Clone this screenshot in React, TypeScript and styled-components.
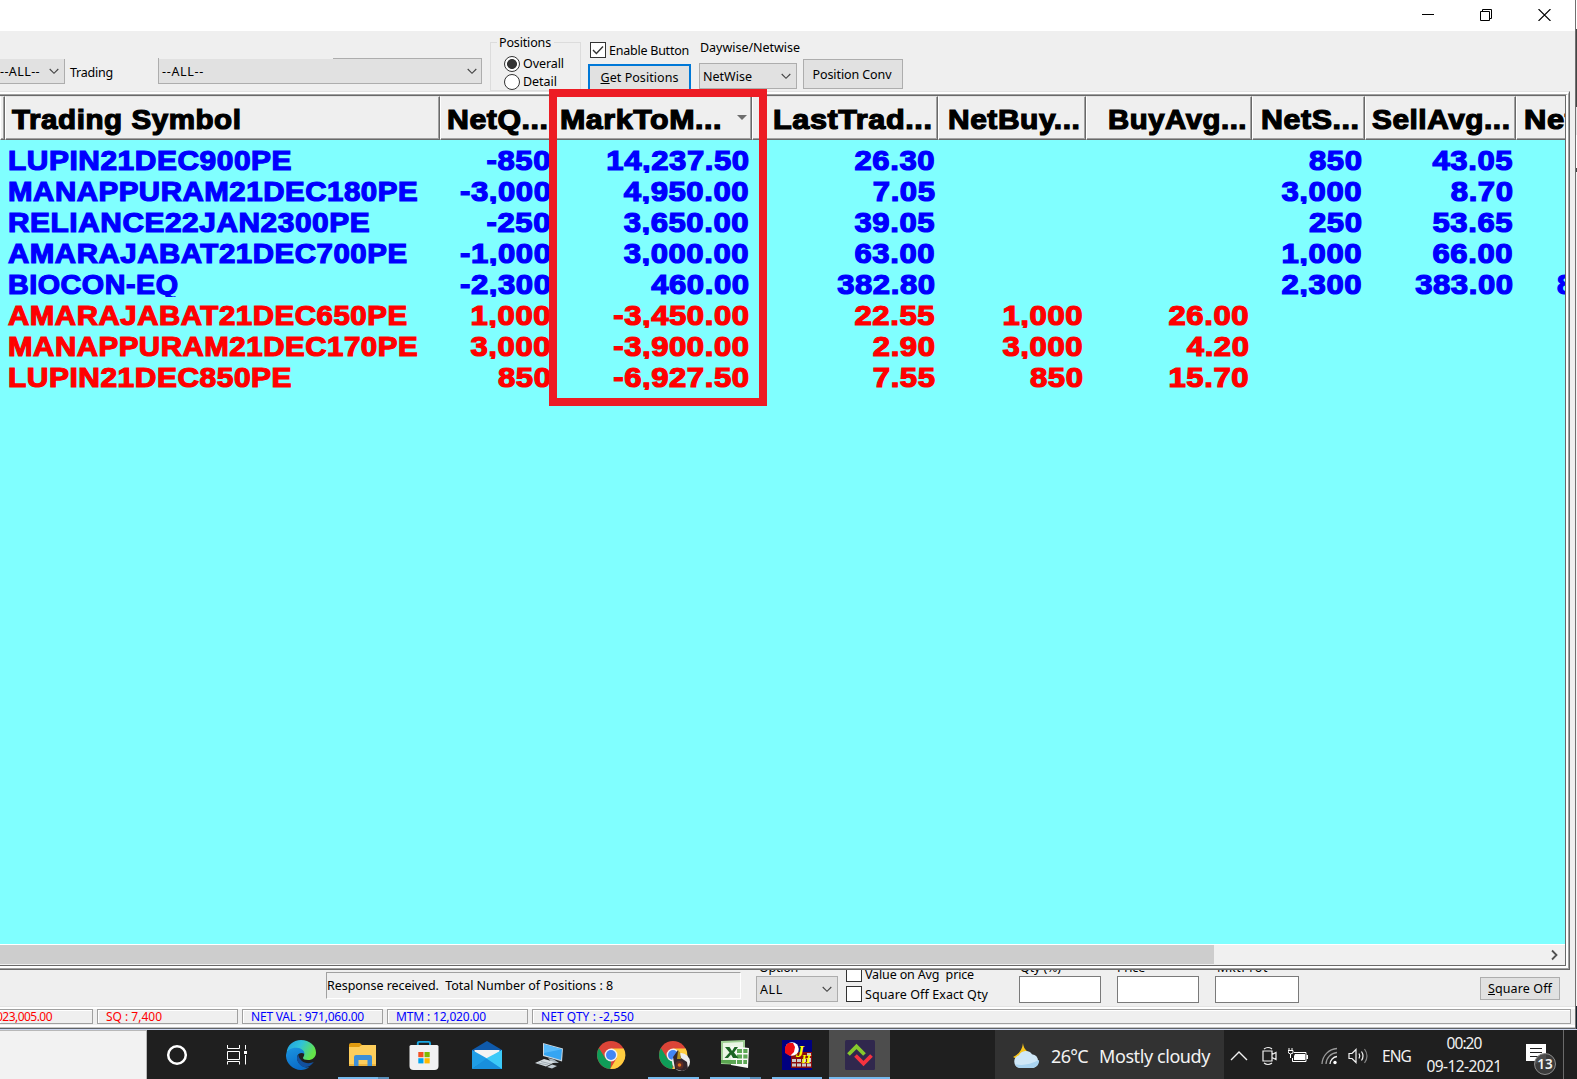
import React, { useLayoutEffect, useRef, useState } from "react";
import styled, { createGlobalStyle, css } from "styled-components";

const UI = `"Noto Sans", "Open Sans", "Liberation Sans", sans-serif`;
const HEAVY = `"Liberation Sans", Arial, sans-serif`;
const COLUMNS = "5px 435px 114px 198px 186px 148px 166px 113px 151px 100px";

const Global = createGlobalStyle`
  * { box-sizing: border-box; }
  html, body { margin: 0; padding: 0; overflow: hidden; background: #efefef; }
  body { font-family: ${UI}; font-size: 12.5px; color: #000; }
`;

/* ---------- text that is tracked to a given width ---------- */
const FitBox = styled.span<{ $w: number }>`
  display: inline-block;
  flex: none;
  width: ${(p) => p.$w}px;
  white-space: pre;
`;

function Fit({ w, children, hotkey }: { w: number; children: string; hotkey?: boolean }) {
  const ref = useRef<HTMLSpanElement>(null);
  const [ls, setLs] = useState(0);
  useLayoutEffect(() => {
    const el = ref.current;
    if (el) setLs((w - el.getBoundingClientRect().width) / children.length);
  }, []);
  return (
    <FitBox $w={w}>
      <span ref={ref} style={{ letterSpacing: `${ls}px` }}>
        {hotkey ? <><u>{children[0]}</u>{children.slice(1)}</> : children}
      </span>
    </FitBox>
  );
}

/* ---------- bold text widened to a given width ---------- */
const Wide = styled.span`
  display: inline-block;
  transform-origin: 0 0;
`;

function Heavy({ w, children }: { w: number; children: string }) {
  const ref = useRef<HTMLSpanElement>(null);
  const [k, setK] = useState(1);
  useLayoutEffect(() => {
    const el = ref.current;
    if (el) setK(w / el.offsetWidth);
  }, []);
  return (
    <FitBox $w={w}>
      <Wide ref={ref} style={{ transform: `scaleX(${k})` }}>{children}</Wide>
    </FitBox>
  );
}

/* ---------- shell ---------- */
const Screen = styled.div`
  width: 1577px;
  height: 1079px;
  display: flex;
  flex-direction: column;
  overflow: hidden;
`;
const Desktop = styled.div`
  height: 1030px;
  display: flex;
`;
const Win = styled.div`
  width: 1575px;
  display: flex;
  flex-direction: column;
  background: #efefef;
`;
const Edge = styled.div`
  width: 2px;
  background: linear-gradient(#707070, #707070) 0 0 / 1px 100% no-repeat,
    linear-gradient(#fff 0 29px, #454545 29px 107px, #e8e8e8 107px 135px, #fff 135px 168px, #444 168px 172px, #f4f4f4 172px 1006px, #14222c 1006px);
`;
const TitleBar = styled.div`
  height: 31px;
  background: #fff;
  display: flex;
  justify-content: flex-end;
  padding: 9px 24px 0 0;
  gap: 46px;
  flex: none;
`;
const Toolbar = styled.div`
  height: 60px;
  flex: none;
  display: flex;
  align-items: flex-start;
`;
const Label = styled.div<{ $mt?: number; $ml?: number }>`
  line-height: 16px;
  height: 16px;
  margin: ${(p) => p.$mt ?? 0}px 0 0 ${(p) => p.$ml ?? 0}px;
  white-space: pre;
`;
const Combo = styled.div<{ $w: number; $h: number; $openTop?: boolean }>`
  width: ${(p) => p.$w}px;
  height: ${(p) => p.$h}px;
  background: #e1e1e1;
  border: 1px solid #adadad;
  ${(p) => p.$openTop && css`border-top: 0; border-left: 0;`}
  display: flex;
  align-items: center;
  justify-content: space-between;
  padding: 1px 5px 0 3px;
  flex: none;
  line-height: 16px;
`;
const WideCombo = styled(Combo)`
  margin: 27px 0 0 45px;
  padding-top: 2px;
  padding-right: 4px;
  background: linear-gradient(90deg, #efefef 174px, #adadad 174px) 0 0 / 100% 1px no-repeat, #e1e1e1;
  border-top: 0;
`;
const CornerCombo = styled(Combo)`
  margin-top: 28px;
  padding: 1px 5px 0 0;
`;
const NetCombo = styled(Combo)`
  margin-top: 7px;
`;
const Group = styled.div`
  width: 91px;
  height: 49px;
  margin: 11px 0 0 8px;
  border: 1px solid #dcdcdc;
  flex: none;
`;
const Legend = styled.div`
  margin: -8px 0 0 6px;
  padding: 0 2px;
  width: 57px;
  height: 16px;
  line-height: 16px;
  background: #efefef;
`;
const Option = styled.label`
  display: flex;
  align-items: center;
  gap: 3px;
  height: 18px;
  padding-left: 13px;
  line-height: 16px;
`;
const OptionList = styled.div`
  margin-top: 4px;
`;
const Dot = styled.span<{ $on?: boolean }>`
  width: 16px;
  height: 16px;
  border-radius: 50%;
  border: 1px solid #333;
  background: ${(p) => (p.$on ? "radial-gradient(circle, #333 0 4.6px, #fff 5.3px)" : "#fff")};
`;
const Stack = styled.div<{ $ml: number; $mt: number }>`
  margin: ${(p) => p.$mt}px 0 0 ${(p) => p.$ml}px;
  display: flex;
  flex-direction: column;
  flex: none;
`;
const CheckRow = styled.div<{ $ml?: number; $mt?: number }>`
  display: flex;
  gap: 3px;
  height: 16px;
  line-height: 16px;
  align-items: center;
  margin: ${(p) => p.$mt ?? 0}px 0 0 ${(p) => p.$ml ?? 0}px;
  & > ${FitBox} { margin-top: 2px; }
`;
const Box = styled.span`
  width: 16px;
  height: 16px;
  border: 1px solid #333;
  background: #fff;
  display: flex;
  flex: none;
`;
const Button = styled.div<{ $w: number; $h: number; $focus?: boolean }>`
  width: ${(p) => p.$w}px;
  height: ${(p) => p.$h}px;
  border: ${(p) => (p.$focus ? "2px solid #0078d7" : "1px solid #adadad")};
  background: #e1e1e1;
  display: flex;
  align-items: center;
  justify-content: center;
  line-height: 16px;
  flex: none;
`;
const GetButton = styled(Button)`
  margin-top: 6px;
`;
const ConvButton = styled(Button)`
  margin: 28px 0 0 3px;
  padding: 2px 2px 0 0;
`;

/* ---------- table ---------- */
const Bevel = styled.div`
  width: 1570px;
  height: 879px;
  flex: none;
  border-style: solid;
  border-width: 1px 1px 1px 0;
  border-color: #e3e3e3 #696969 #696969;
`;
const BevelMid = styled.div`
  height: 877px;
  border-style: solid;
  border-width: 2px 1px 1px 0;
  border-color: #fff #a0a0a0 #a0a0a0;
`;
const BevelIn = styled.div`
  height: 874px;
  border-style: solid;
  border-width: 1px 2px 2px 0;
  border-color: #a0a0a0 #fff #fff;
`;
const TableFrame = styled.div`
  height: 871px;
  border-style: solid;
  border-width: 1px 1px 1px 0;
  border-color: #696969;
  position: relative;
  display: flex;
  flex-direction: column;
  background: #80ffff;
`;
const Clip = styled.div`
  width: 1565px;
  overflow: hidden;
  flex: 1;
`;
const HeadRow = styled.div`
  display: grid;
  grid-template-columns: ${COLUMNS};
  height: 44px;
  width: 1616px;
`;
const HeadCell = styled.div<{ $align?: string; $pad?: number; $left?: number }>`
  height: 44px;
  min-width: 0;
  background: #efefef;
  border-top: 1px solid #e3e3e3;
  border-left: 1px solid #fff;
  border-right: 1px solid #696969;
  border-bottom: 1px solid #696969;
  box-shadow: inset -1px -1px 0 #a0a0a0;
  display: flex;
  align-items: center;
  justify-content: ${(p) => p.$align ?? "flex-end"};
  padding: 3px ${(p) => p.$pad ?? 4}px 0 ${(p) => p.$left ?? 6}px;
  font: 700 27px/38px ${HEAVY};
  letter-spacing: 0.5px;
  -webkit-text-stroke: 1.2px #000;
  white-space: nowrap;
`;
const SortArrow = styled.i`
  border: 5px solid transparent;
  border-top-color: #6d6d6d;
  border-bottom: 0;
  margin: 0 0 4px 15px;
`;
const Row = styled.div<{ $loss: boolean }>`
  display: grid;
  grid-template-columns: ${COLUMNS};
  height: 31px;
  width: 1616px;
  clip-path: inset(0 0 -2px 0);
  color: ${(p) => (p.$loss ? "#ff0000" : "#0000ff")};
  font: 700 27px/42px ${HEAVY};
  letter-spacing: 0.5px;
  -webkit-text-stroke: 1.2px currentColor;
`;
const NumCell = styled.div`
  text-align: right;
  padding-right: 2.5px;
  white-space: nowrap;
`;
const Num = styled.span`
  display: inline-block;
  transform: scaleX(1.15);
  transform-origin: 100% 0;
`;
const SymCell = styled.div`
  padding-left: 3px;
  white-space: nowrap;
`;
const LastCell = styled(SymCell)`
  padding-left: 41px;
`;
const HScroll = styled.div`
  height: 21px;
  width: 1565px;
  border-top: 1px solid #fff;
  background: #f0f0f0;
  display: flex;
  justify-content: space-between;
  align-items: center;
  padding-right: 7px;
  flex: none;
`;
const Thumb = styled.div`
  width: 1214px;
  height: 19px;
  background: #cdcdcd;
  align-self: flex-start;
`;
const Highlight = styled.div`
  position: absolute;
  left: 549px;
  top: -7px;
  width: 218px;
  height: 317px;
  border: 8px solid #ed1c24;
`;

/* ---------- footer ---------- */
const Footer = styled.div`
  height: 36px;
  flex: none;
  display: flex;
  align-items: flex-start;
  overflow: hidden;
`;
const Message = styled.div`
  margin: 2px 0 0 326px;
  width: 415px;
  height: 27px;
  border: 1px solid;
  border-color: #a0a0a0 #fff #fff #a0a0a0;
  line-height: 25px;
  flex: none;
`;
const Cut = styled.div<{ $ml: number }>`
  line-height: 16px;
  height: 16px;
  margin: -10px 0 0 ${(p) => p.$ml}px;
`;
const Field = styled.div<{ $w: number }>`
  width: ${(p) => p.$w}px;
  height: 27px;
  background: #fff;
  border: 1px solid #7a7a7a;
`;
const Status = styled.div`
  height: 24px;
  flex: none;
  border-top: 1px solid #e3e3e3;
  background: linear-gradient(#fff 0 2px, #efefef 2px 18px, #fff 18px 20px, #c4c4c4 20px 21px, #5f6368 21px 22px, #62666e 22px 23px);
  display: flex;
  gap: 4px;
  padding: 2px 4px 0 0;
`;
const Pane = styled.div<{ $w: number; $c?: string }>`
  width: ${(p) => p.$w}px;
  height: 15px;
  border: 1px solid #a0a0a0;
  color: ${(p) => p.$c ?? "#0000ff"};
  line-height: 14px;
  padding-left: 8px;
  flex: none;
  font-size: 12px;
  white-space: pre;
  box-shadow: inset 1px 1px 0 #fff;
`;
const FirstPane = styled(Pane)`
  border-left: 0;
  padding: 0;
  & > span { margin-left: -4px; }
`;

/* ---------- taskbar ---------- */
const Taskbar = styled.div`
  height: 49px;
  background: #1f1f1f;
  border-top: 1px solid #1f1f1f;
  box-shadow: 0 -1px 0 #c9d4ee;
  display: flex;
  color: #f2f2f2;
  position: relative;
`;
const Search = styled.div`
  width: 147px;
  margin-top: -1px;
  background: #f2f2f2;
  border: solid #b8b8b8;
  border-width: 1px 1px 0 0;
`;
const TaskItem = styled.div<{ $w: number; $run?: boolean; $active?: boolean; $ml?: number; $multi?: boolean }>`
  width: ${(p) => p.$w}px;
  margin: -1px 0 0 ${(p) => p.$ml ?? 0}px;
  height: 49px;
  display: flex;
  justify-content: center;
  align-items: flex-start;
  padding-top: 10px;
  flex: none;
  background: ${(p) => (p.$active ? "#4d4d4d" : "transparent")};
  border-bottom: 2px solid ${(p) => (p.$run ? "#76b9ed" : "transparent")};
  ${(p) => p.$multi && css`
    border-bottom: 0;
    padding-right: 2px;
    background: linear-gradient(90deg, #76b9ed 40px, #5a8fb9 40px) 0 100% / 100% 2px no-repeat;
  `}
`;
const Weather = styled.div`
  margin: -1px 0 0 105px;
  width: 229px;
  height: 49px;
  background: #323232;
  display: flex;
  align-items: center;
  padding: 2px 0 0 18px;
  font-size: 18px;
  line-height: 24px;
  gap: 11px;
  flex: none;
`;
const Tray = styled.div`
  display: flex;
  align-items: center;
  font-size: 15.5px;
  line-height: 22px;
  padding: 2px 0 0 6px;
`;
const TrayItem = styled.div<{ $ml: number }>`
  margin-left: ${(p) => p.$ml}px;
  display: flex;
`;
const Clock = styled.div`
  width: 76px;
  margin: -2px 0 0 15px;
  display: flex;
  flex-direction: column;
  align-items: center;
  line-height: 23px;
`;
const ShowDesktop = styled.div`
  border-left: 1px solid #6a6a6a;
  margin: -1px 0 0 16px;
  width: 6px;
`;
const Notice = styled.div`
  position: relative;
  margin: 6px 0 0 24px;
  height: 30px;
`;
const Badge = styled.span`
  position: absolute;
  left: 8px;
  top: 9px;
  width: 22px;
  height: 22px;
  border-radius: 50%;
  border: 1px solid #8d8d8d;
  background: rgba(62, 62, 62, 0.92);
  font-size: 13.5px;
  font-weight: 600;
  line-height: 20px;
  text-align: center;
`;

const Chevron = () => (
  <svg width="10" height="7" viewBox="0 0 10 7"><path d="M0.7 1 L5 5.3 L9.3 1" fill="none" stroke="#444" strokeWidth="1.1" /></svg>
);

const Chrome = ({ x = 15, y = 15 }: { x?: number; y?: number }) => (
  <g transform={`translate(${x} ${y})`}>
    <circle r="14" fill="#db4437" />
    <path d="M-12.1 -7 L-5.6 3.4 L0 6.5 L-0.5 14 A14 14 0 0 1 -12.1 -7Z" fill="#0f9d58" />
    <path d="M0 -6.4 H12.7 A14 14 0 0 1 -0.8 14 L5.6 3.2Z" fill="#ffcd40" />
    <circle r="6.4" fill="#f1f1f1" />
    <circle r="5" fill="#4285f4" />
  </g>
);

const headers = ["NetQ...", "MarkToM...", "LastTrad...", "NetBuy...", "BuyAvg...", "NetS...", "SellAvg..."];
const headWidths = [102, 162, 160, 133, 139, 99, 139];

type Position = { symbol: string; w: number; loss?: boolean; v: string[] };
const positions: Position[] = [
  { symbol: "LUPIN21DEC900PE", w: 284.5, v: ["-850", "14,237.50", "26.30", "", "", "850", "43.05", ""] },
  { symbol: "MANAPPURAM21DEC180PE", w: 410, v: ["-3,000", "4,950.00", "7.05", "", "", "3,000", "8.70", ""] },
  { symbol: "RELIANCE22JAN2300PE", w: 362.5, v: ["-250", "3,650.00", "39.05", "", "", "250", "53.65", ""] },
  { symbol: "AMARAJABAT21DEC700PE", w: 400, v: ["-1,000", "3,000.00", "63.00", "", "", "1,000", "66.00", ""] },
  { symbol: "BIOCON-EQ", w: 171, v: ["-2,300", "460.00", "382.80", "", "", "2,300", "383.00", "8"] },
  { symbol: "AMARAJABAT21DEC650PE", w: 400, loss: true, v: ["1,000", "-3,450.00", "22.55", "1,000", "26.00", "", "", ""] },
  { symbol: "MANAPPURAM21DEC170PE", w: 410, loss: true, v: ["3,000", "-3,900.00", "2.90", "3,000", "4.20", "", "", ""] },
  { symbol: "LUPIN21DEC850PE", w: 284.5, loss: true, v: ["850", "-6,927.50", "7.55", "850", "15.70", "", "", ""] },
];

function Titles() {
  return (
    <TitleBar>
      <svg width="12" height="12"><path d="M0 5.5H12" stroke="#000" /></svg>
      <svg width="12" height="12" fill="none" stroke="#000"><path d="M0.5 2.5H9.5V11.5H0.5ZM2.5 2.5V0.5H11.5V9.5H9.5" /></svg>
      <svg width="13" height="12"><path d="M0.5 0L12.5 12M12.5 0L0.5 12" stroke="#000" strokeWidth="1.1" /></svg>
    </TitleBar>
  );
}

function Controls() {
  return (
    <Toolbar>
      <CornerCombo $w={65} $h={25} $openTop><Fit w={40}>--ALL--</Fit><Chevron /></CornerCombo>
      <Label $mt={34} $ml={5}><Fit w={43}>Trading</Fit></Label>
      <WideCombo $w={324} $h={26}><Fit w={42}>--ALL--</Fit><Chevron /></WideCombo>
      <Group>
        <Legend><Fit w={52}>Positions</Fit></Legend>
        <OptionList>
          <Option><Dot $on /><Fit w={41}>Overall</Fit></Option>
          <Option><Dot /><Fit w={34}>Detail</Fit></Option>
        </OptionList>
      </Group>
      <Stack $ml={7} $mt={11}>
        <CheckRow $ml={2}>
          <Box><svg width="14" height="14"><path d="M2 7L5.4 10.4L12 3.6" fill="none" stroke="#333" strokeWidth="1.4" /></svg></Box>
          <Fit w={80}>Enable Button</Fit>
        </CheckRow>
        <GetButton $w={103} $h={27} $focus><Fit w={78} hotkey>Get Positions</Fit></GetButton>
      </Stack>
      <Stack $ml={8} $mt={9}>
        <Label $ml={1}><Fit w={100}>Daywise/Netwise</Fit></Label>
        <NetCombo $w={98} $h={26}><Fit w={49}>NetWise</Fit><Chevron /></NetCombo>
      </Stack>
      <ConvButton $w={100} $h={30}><Fit w={79}>Position Conv</Fit></ConvButton>
    </Toolbar>
  );
}

function Positions() {
  return (
    <Bevel><BevelMid><BevelIn><TableFrame>
      <Clip>
        <HeadRow>
          <HeadCell $pad={0} $left={0} />
          <HeadCell $align="flex-start"><Heavy w={230}>Trading Symbol</Heavy></HeadCell>
          {headers.map((h, i) => (
            <HeadCell key={h}>
              <Heavy w={headWidths[i]}>{h}</Heavy>
              {i === 1 && <SortArrow />}
            </HeadCell>
          ))}
          <HeadCell $align="flex-start" $left={7}><Heavy w={109}>NetSell</Heavy></HeadCell>
        </HeadRow>
        {positions.map((p) => (
          <Row key={p.symbol} $loss={!!p.loss}>
            <span />
            <SymCell><Heavy w={p.w}>{p.symbol}</Heavy></SymCell>
            {p.v.slice(0, 7).map((v, i) => <NumCell key={i}><Num>{v}</Num></NumCell>)}
            <LastCell>{p.v[7] && <Heavy w={18}>{p.v[7]}</Heavy>}</LastCell>
          </Row>
        ))}
      </Clip>
      <HScroll>
        <Thumb />
        <svg width="7" height="12"><path d="M1 1.5L5.5 6L1 10.5" fill="none" stroke="#505050" strokeWidth="1.8" /></svg>
      </HScroll>
      <Highlight />
    </TableFrame></BevelIn></BevelMid></Bevel>
  );
}

function Bottom() {
  return (
    <>
      <Footer>
        <Message><Fit w={286}>Response received.  Total Number of Positions : 8</Fit></Message>
        <Stack $ml={15} $mt={0}>
          <Cut $ml={3}><Fit w={39}>Option</Fit></Cut>
          <Combo $w={82} $h={26}><Fit w={23}>ALL</Fit><Chevron /></Combo>
        </Stack>
        <Stack $ml={8} $mt={-4}>
          <CheckRow><Box /><Fit w={109}>Value on Avg  price</Fit></CheckRow>
          <CheckRow $mt={4}><Box /><Fit w={123}>Square Off Exact Qty</Fit></CheckRow>
        </Stack>
        <Stack $ml={31} $mt={0}><Cut $ml={1}><Fit w={41}>Qty (%)</Fit></Cut><Field $w={82} /></Stack>
        <Stack $ml={16} $mt={0}><Cut $ml={0}><Fit w={28}>Price</Fit></Cut><Field $w={82} /></Stack>
        <Stack $ml={16} $mt={0}><Cut $ml={2}><Fit w={51}>MktProt</Fit></Cut><Field $w={84} /></Stack>
        <Stack $ml={181} $mt={7}><Button $w={80} $h={23}><Fit w={64} hotkey>Square Off</Fit></Button></Stack>
      </Footer>
      <Status>
        <FirstPane $w={93} $c="#ff0000"><Fit w={56}>023,005.00</Fit></FirstPane>
        <Pane $w={141} $c="#ff0000"><Fit w={56}>SQ : 7,400</Fit></Pane>
        <Pane $w={141}><Fit w={113}>NET VAL : 971,060.00</Fit></Pane>
        <Pane $w={141}><Fit w={90}>MTM : 12,020.00</Fit></Pane>
        <Pane $w={1039}><Fit w={93}>NET QTY : -2,550</Fit></Pane>
      </Status>
    </>
  );
}

function TaskbarRow() {
  return (
    <Taskbar>
      <Search />
      <TaskItem $w={60}><svg width="30" height="30"><circle cx="15" cy="15" r="8.8" fill="none" stroke="#fff" strokeWidth="2.5" /></svg></TaskItem>
      <TaskItem $w={60}>
        <svg width="30" height="30" fill="none" stroke="#fff">
          <path d="M5.5 5V8.5H17.5V5M5.5 11.5H17.5V19.5H5.5ZM5.5 24.5V21.5H17.5V24.5M23.5 5V9.5M23.5 15V24.5" />
          <path d="M22 11H25V14H22Z" fill="#fff" stroke="none" />
        </svg>
      </TaskItem>
      <TaskItem $w={62} $ml={3}>
        <svg width="30" height="30" viewBox="0 0 30 30">
          <defs>
            <linearGradient id="eg" x1="0" y1="0" x2="1" y2="0.4"><stop offset="0" stopColor="#1e9be2" /><stop offset="0.5" stopColor="#30c2d8" /><stop offset="1" stopColor="#63e448" /></linearGradient>
            <linearGradient id="eb" x1="0" y1="0" x2="0.4" y2="1"><stop offset="0" stopColor="#1b95e0" /><stop offset="1" stopColor="#0a6cc8" /></linearGradient>
          </defs>
          <path d="M0.6 13C1 5.5 7 0 15 0C23.5 0 30 5.6 30 12.4C30 17 26.4 20 22 20C19 20 17 19 17 18C17 17 18.4 16.4 18.2 14C17.8 11 15 9 11.5 9C6 9 1.6 11 0.6 13Z" fill="url(#eg)" />
          <path d="M0 15C0.6 9.6 5.6 7.6 10.6 7.8C15.6 8 18.6 11 18.4 14C16.8 12.6 14.4 12.6 12.6 14C9.6 16.6 11 23.6 17 26.6C19 27.8 21.6 27.8 23.6 26.8C21 29 18 30 15 30C6.4 30 -0.4 23 0 15Z" fill="url(#eb)" />
          <path d="M12.4 14.4C9.6 17 11 23.6 16.4 26.4C20.6 28.4 25 26 27.8 22C24 23.8 18.4 23.6 15.4 20.4C13.6 18.6 12.4 16.6 12.4 14.4Z" fill="#12509e" />
        </svg>
      </TaskItem>
      <TaskItem $w={51} $ml={6} $multi>
        <svg width="30" height="30">
          <path d="M1 5Q1 3 3 3H12L14 5V10H1Z" fill="#e09b10" />
          <path d="M1 7H11L14 5H28V25H1Z" fill="#fdce5c" />
          <path d="M1 24H28V26H1Z" fill="#edb53d" />
          <path d="M6 26V17Q6 15 8 15H22Q24 15 24 17V26H19.5V20H10.5V26Z" fill="#3d8fd8" />
        </svg>
      </TaskItem>
      <TaskItem $w={52} $ml={9}>
        <svg width="30" height="31">
          <path d="M8.8 7V3Q8.8 1.9 10 1.9H19.8Q21 1.9 21 3V7" fill="none" stroke="#19a8e4" strokeWidth="1.9" />
          <path d="M0.5 6.5Q0.5 5 2 5H28Q29.5 5 29.5 6.5V26Q29.5 30 25.5 30H4.5Q0.5 30 0.5 26Z" fill="#f1f1f2" />
          <path d="M9.3 12H14.5V17.2H9.3Z" fill="#f25022" /><path d="M15.5 12H20.7V17.2H15.5Z" fill="#7fba00" />
          <path d="M9.3 18.2H14.5V23.4H9.3Z" fill="#00a4ef" /><path d="M15.5 18.2H20.7V23.4H15.5Z" fill="#ffb900" />
        </svg>
      </TaskItem>
      <TaskItem $w={52} $ml={11}>
        <svg width="30" height="30">
          <path d="M0 10L15 1L30 10V13H0Z" fill="#0f5aab" />
          <path d="M2.5 10H27.5V22H2.5Z" fill="#f3f3f3" />
          <path d="M0 10L16 19L0 29Z" fill="#1f9de6" /><path d="M30 10L0 29H30Z" fill="#2fb0f0" />
          <path d="M30 10L14 18.5L30 29Z" fill="#3ccaf8" /><path d="M0 29L14.5 18.5L30 29Z" fill="#188fdc" />
        </svg>
      </TaskItem>
      <TaskItem $w={52} $ml={10}>
        <svg width="30" height="30">
          <path d="M9 3L29 8.5L28 21.5L9 16Z" fill="#c9d5de" />
          <path d="M10 4.3L28 9.3L27 20L10 15Z" fill="#35a5f2" /><path d="M10 4.3L28 9.3L10 13Z" fill="#58bafa" />
          <path d="M14 18L20 19.5L25 23L18 23Z" fill="#a6b2bb" />
          <path d="M1 23L10 19L21 22L12 26.5Z" fill="#d5dce1" /><path d="M13 27L18 24.5L23 26L18 28.5Z" fill="#c0cad2" />
          <path d="M4 23L14 25M7 21.5L17 24" stroke="#8f9ba4" strokeWidth="0.7" />
        </svg>
      </TaskItem>
      <TaskItem $w={52} $ml={10}><svg width="30" height="30"><Chrome /></svg></TaskItem>
      <TaskItem $w={51} $ml={11} $run>
        <svg width="34" height="32">
          <Chrome x={16} />
          <circle cx="24" cy="22" r="9" fill="#ededed" />
          <path d="M16 17L21 10L24 18L30 22L31 29L25 31L18 29Z" fill="#33262c" />
          <path d="M21 11L23 12L24 19H20Z" fill="#b3921f" /><circle cx="22.5" cy="25" r="4" fill="#5a2b28" /><circle cx="22.5" cy="25" r="1.8" fill="#e0711d" />
        </svg>
      </TaskItem>
      <TaskItem $w={51} $ml={11} $multi>
        <svg width="30" height="30">
          <path d="M1 1L25 0L25 25L1 24Z" fill="#9fcf94" /><path d="M3 3L23 2V23L3 22Z" fill="#e9f5e4" />
          <path d="M11 6L29 8L28 28L11 25Z" fill="#f7f9f5" />
          <path d="M17 9H22V13H17ZM23.3 9H27.5V13H23.3ZM17 14.5H22V18.5H17ZM23.3 14.5H27.5V18.5H23.3ZM11.5 20H16V24H11.5ZM17 20H22V24H17ZM23.3 20H27V24H23.3Z" fill="#5da855" />
          <path d="M1 20H12V24L1 23Z" fill="#5aa650" />
          <path d="M5 7H9.5L12 11L14.5 7H18L14 12.5L18.5 18H13L11 14.5L8 18H4.5L9.5 12.5Z" fill="#1c6424" />
        </svg>
      </TaskItem>
      <TaskItem $w={50} $ml={11} $run>
        <svg width="30" height="30">
          <path d="M0 0H30V30H0Z" fill="#000080" />
          <path d="M9 12H30V28H9Z" fill="#8a0d0d" />
          <path d="M10 19h4v3h-4zM15 19h4v3h-4zM20 19h4v3h-4zM25 13h4v3h-4zM25 18h4v4h-4zM10 23.5h4v3h-4zM15 23.5h4v3h-4zM20 23.5h4v3h-4zM25 23.5h4v3h-4z" fill="#c9c9c9" />
          <circle cx="10" cy="9" r="6.8" fill="#fff" />
          <path d="M3 7L6 3L11 3L13 7L12 12L8 16L3 13Z" fill="#ee0c14" />
          <text x="14" y="17" fill="#ffff00" fontFamily="Liberation Serif" fontStyle="italic" fontWeight="700" fontSize="16">J</text>
          <text x="19.5" y="22.5" fill="#ffff00" fontFamily="Liberation Serif" fontStyle="italic" fontWeight="700" fontSize="12">H</text>
        </svg>
      </TaskItem>
      <TaskItem $w={61} $ml={7} $run $active>
        <svg width="30" height="30">
          <rect width="30" height="30" rx="1.5" fill="#30284d" />
          <path d="M3.5 14.5L11.5 6.5L19.5 14.5" fill="none" stroke="#86c92c" strokeWidth="3.8" />
          <path d="M10.5 15.5L18.5 23.5L26.5 15.5" fill="none" stroke="#f5333f" strokeWidth="3.8" />
        </svg>
      </TaskItem>
      <Weather>
        <svg width="27" height="26">
          <path d="M10 0Q10 5 15 9L18 12L8 18L0 14Q9 10 10 0Z" fill="#f8c51c" />
          <path d="M7 25A6.5 6.5 0 0 1 6 12.3A7.5 7.5 0 0 1 19 11.3A7 7 0 0 1 20 25Z" fill="#cfe7f7" />
          <path d="M7 25A6.5 6.5 0 0 1 2 21Q12 24 26 17A7 7 0 0 1 20 25Z" fill="#a9d3f0" />
        </svg>
        <Fit w={37}>26°C</Fit><Fit w={111}>Mostly cloudy</Fit>
      </Weather>
      <Tray>
        <svg width="18" height="12" fill="none" stroke="#f2f2f2"><path d="M1 10L9 2L17 10" strokeWidth="1.4" /></svg>
        <TrayItem $ml={14}>
          <svg width="16" height="20" fill="none" stroke="#f2f2f2" strokeWidth="1.2"><path d="M1 5H10V15H1ZM10 8.5L14 6.5V13.5L10 11.5M2 3Q6 0 10 3M2 17Q6 20 10 17" /></svg>
        </TrayItem>
        <TrayItem $ml={10}>
          <svg width="21" height="17"><path d="M6 4.5H18V13.5H4.5V10" fill="none" stroke="#fff" /><path d="M7 6H17V12H6V8Z" fill="#fff" /><path d="M18.5 7H20V11H18.5Z" fill="#fff" /><path d="M1 0V2M4 0V2M0 2.5H5V5Q2.5 7 0.5 5ZM2.5 6V10" fill="none" stroke="#fff" /></svg>
        </TrayItem>
        <TrayItem $ml={12}>
          <svg width="17" height="18" fill="none"><path d="M1 17A16 16 0 0 1 16 1.5M5 17A12 12 0 0 1 16 5.5" stroke="#9a9a9a" strokeWidth="1.3" /><path d="M9 17A8 8 0 0 1 16 9.5" stroke="#eee" strokeWidth="1.3" /><circle cx="14" cy="15.5" r="1.7" fill="#fff" /></svg>
        </TrayItem>
        <TrayItem $ml={10}>
          <svg width="21" height="18" fill="none" stroke="#f2f2f2" strokeWidth="1.2"><path d="M1 6.5H4L8 2.5V15.5L4 11.5H1ZM11 6.5Q12.5 9 11 11.5M13.5 4.5Q16.5 9 13.5 13.5" /><path d="M16.5 2Q21.5 9 16.5 16" stroke="#858585" /></svg>
        </TrayItem>
        <TrayItem $ml={13}><Fit w={29}>ENG</Fit></TrayItem>
        <Clock><Fit w={35}>00:20</Fit><Fit w={75}>09-12-2021</Fit></Clock>
        <Notice>
          <svg width="21" height="22"><path d="M0 0H20V17H14L9 21V17H0Z" fill="#fff" /><path d="M4 4.5H16M4 8.5H16M4 12.5H12" stroke="#1f1f1f" /></svg>
          <Badge>13</Badge>
        </Notice>
      </Tray>
      <ShowDesktop />
    </Taskbar>
  );
}

export default function App() {
  return (
    <Screen>
      <Global />
      <Desktop>
        <Win>
          <Titles />
          <Controls />
          <Positions />
          <Bottom />
        </Win>
        <Edge />
      </Desktop>
      <TaskbarRow />
    </Screen>
  );
}
